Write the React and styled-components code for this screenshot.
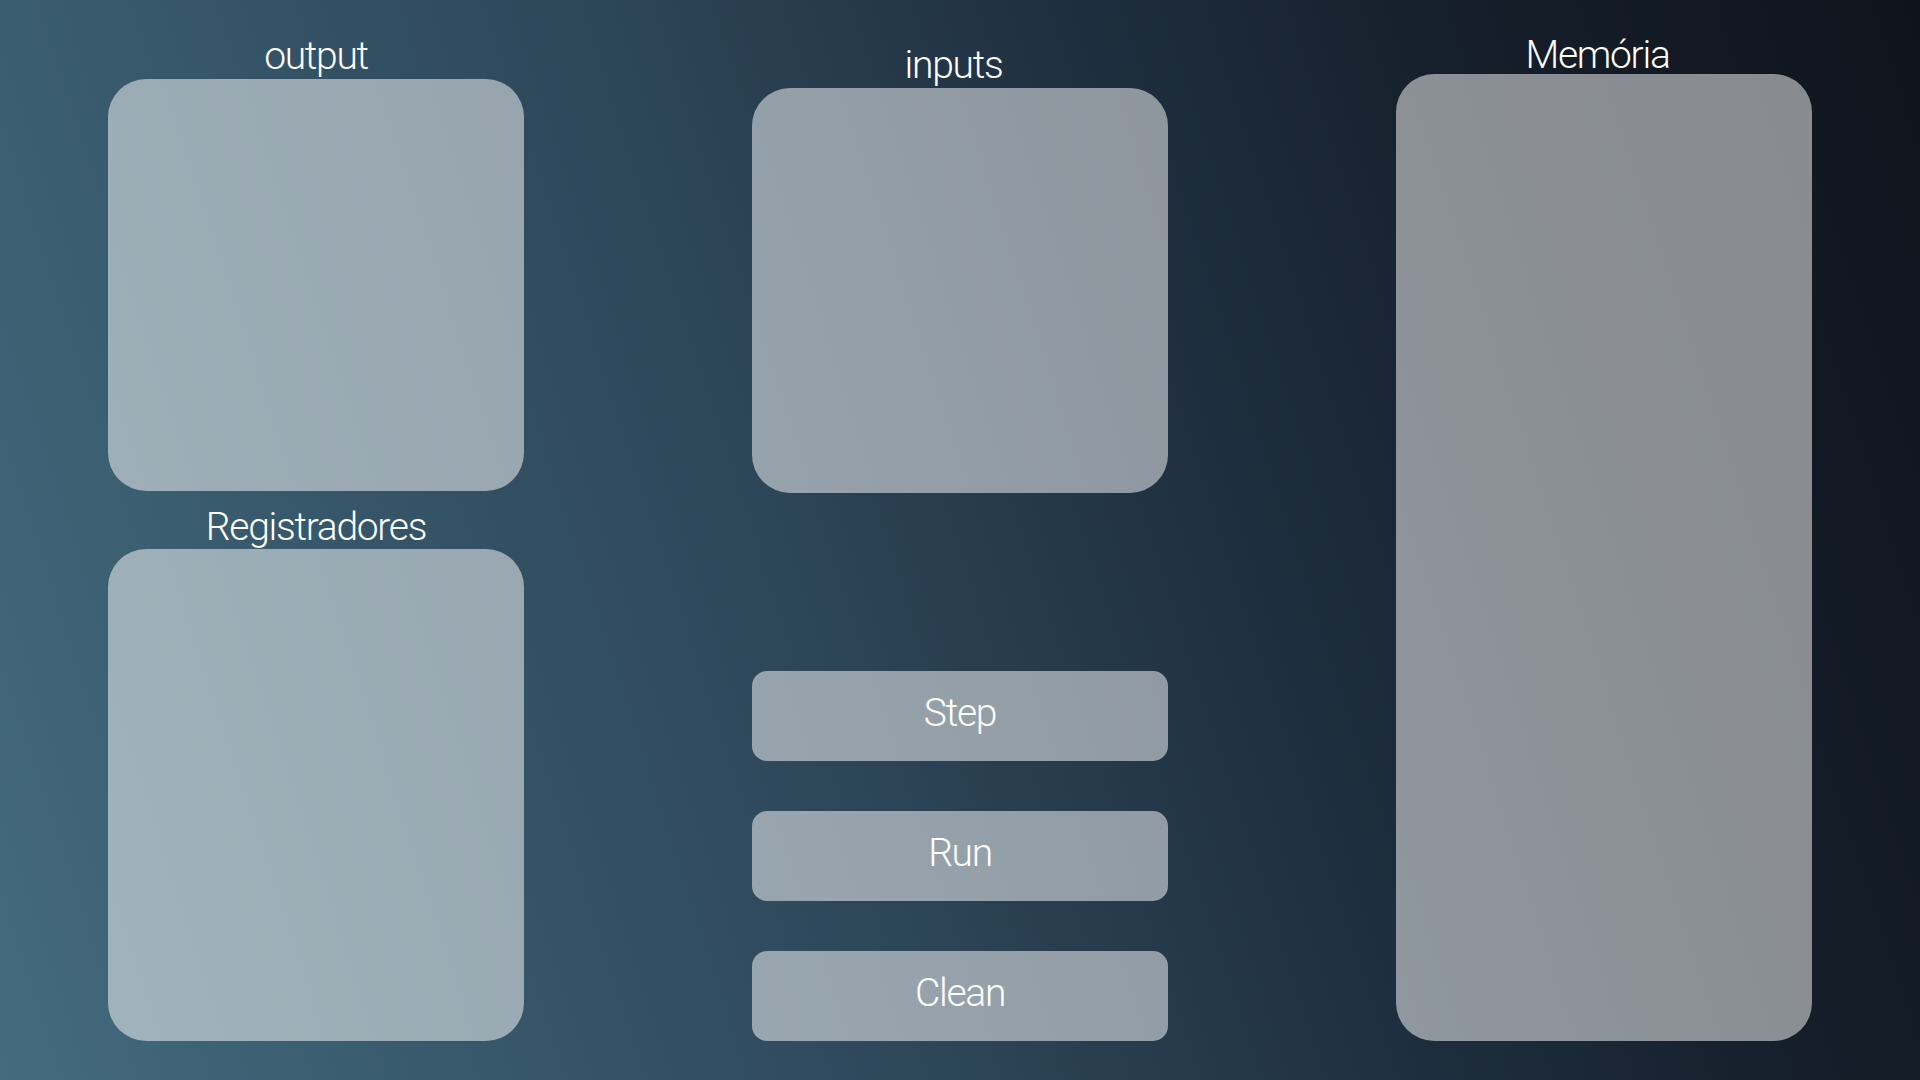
import React from "react";
import styled, { createGlobalStyle } from "styled-components";

const GlobalStyle = createGlobalStyle`
  html, body {
    margin: 0;
    padding: 0;
    width: 100%;
    height: 100%;
  }
  body {
    font-family: Roboto, "Noto Sans", Arial, sans-serif;
    overflow: hidden;
  }
  * { box-sizing: border-box; }
`;

const Page = styled.div`
  width: 1920px;
  height: 1080px;
  padding: 0 108px;
  display: flex;
  justify-content: space-between;
  align-items: flex-start;
  background: linear-gradient(
    72deg,
    #446b7e 0%,
    #37576a 22%,
    #2d4658 42%,
    #1f2f3f 62%,
    #151e2a 80%,
    #0f141c 100%
  );
`;

const Column = styled.section`
  width: 416px;
  display: flex;
  flex-direction: column;
  padding-top: ${(p) => p.$top}px;
`;

const Title = styled.h2`
  margin: 0 0 ${(p) => p.$gap}px;
  margin-top: ${(p) => p.$mt || 0}px;
  padding-right: ${(p) => p.$shift || 0}px;
  height: 38px;
  line-height: 38px;
  font-size: 39px;
  font-weight: 300;
  letter-spacing: -1.3px;
  color: #ffffff;
  text-align: center;
  white-space: nowrap;
`;

const Panel = styled.div`
  height: ${(p) => p.$h}px;
  border-radius: 38px;
  background: rgba(255, 255, 255, 0.5);
`;

const ButtonStack = styled.div`
  margin-top: 178px;
  display: flex;
  flex-direction: column;
  gap: 50px;
`;

const ActionButton = styled.button`
  height: 90px;
  width: 100%;
  border: none;
  border-radius: 15px;
  background: rgba(255, 255, 255, 0.5);
  color: #ffffff;
  font-family: Roboto, "Noto Sans", Arial, sans-serif;
  font-size: 39px;
  font-weight: 300;
  letter-spacing: -1.3px;
  padding: 0 0 6px;
  line-height: 38px;
  cursor: pointer;
`;

export default function App() {
  return (
    <>
      <GlobalStyle />
      <Page>
        <Column $top={37}>
          <Title $gap={4}>output</Title>
          <Panel $h={412} />
          <Title $mt={17} $gap={3}>Registradores</Title>
          <Panel $h={492} />
        </Column>
        <Column $top={46}>
          <Title $gap={4} $shift={13}>inputs</Title>
          <Panel $h={405} />
          <ButtonStack>
            <ActionButton>Step</ActionButton>
            <ActionButton>Run</ActionButton>
            <ActionButton>Clean</ActionButton>
          </ButtonStack>
        </Column>
        <Column $top={36}>
          <Title $gap={0} $shift={13}>Memória</Title>
          <Panel $h={967} />
        </Column>
      </Page>
    </>
  );
}
